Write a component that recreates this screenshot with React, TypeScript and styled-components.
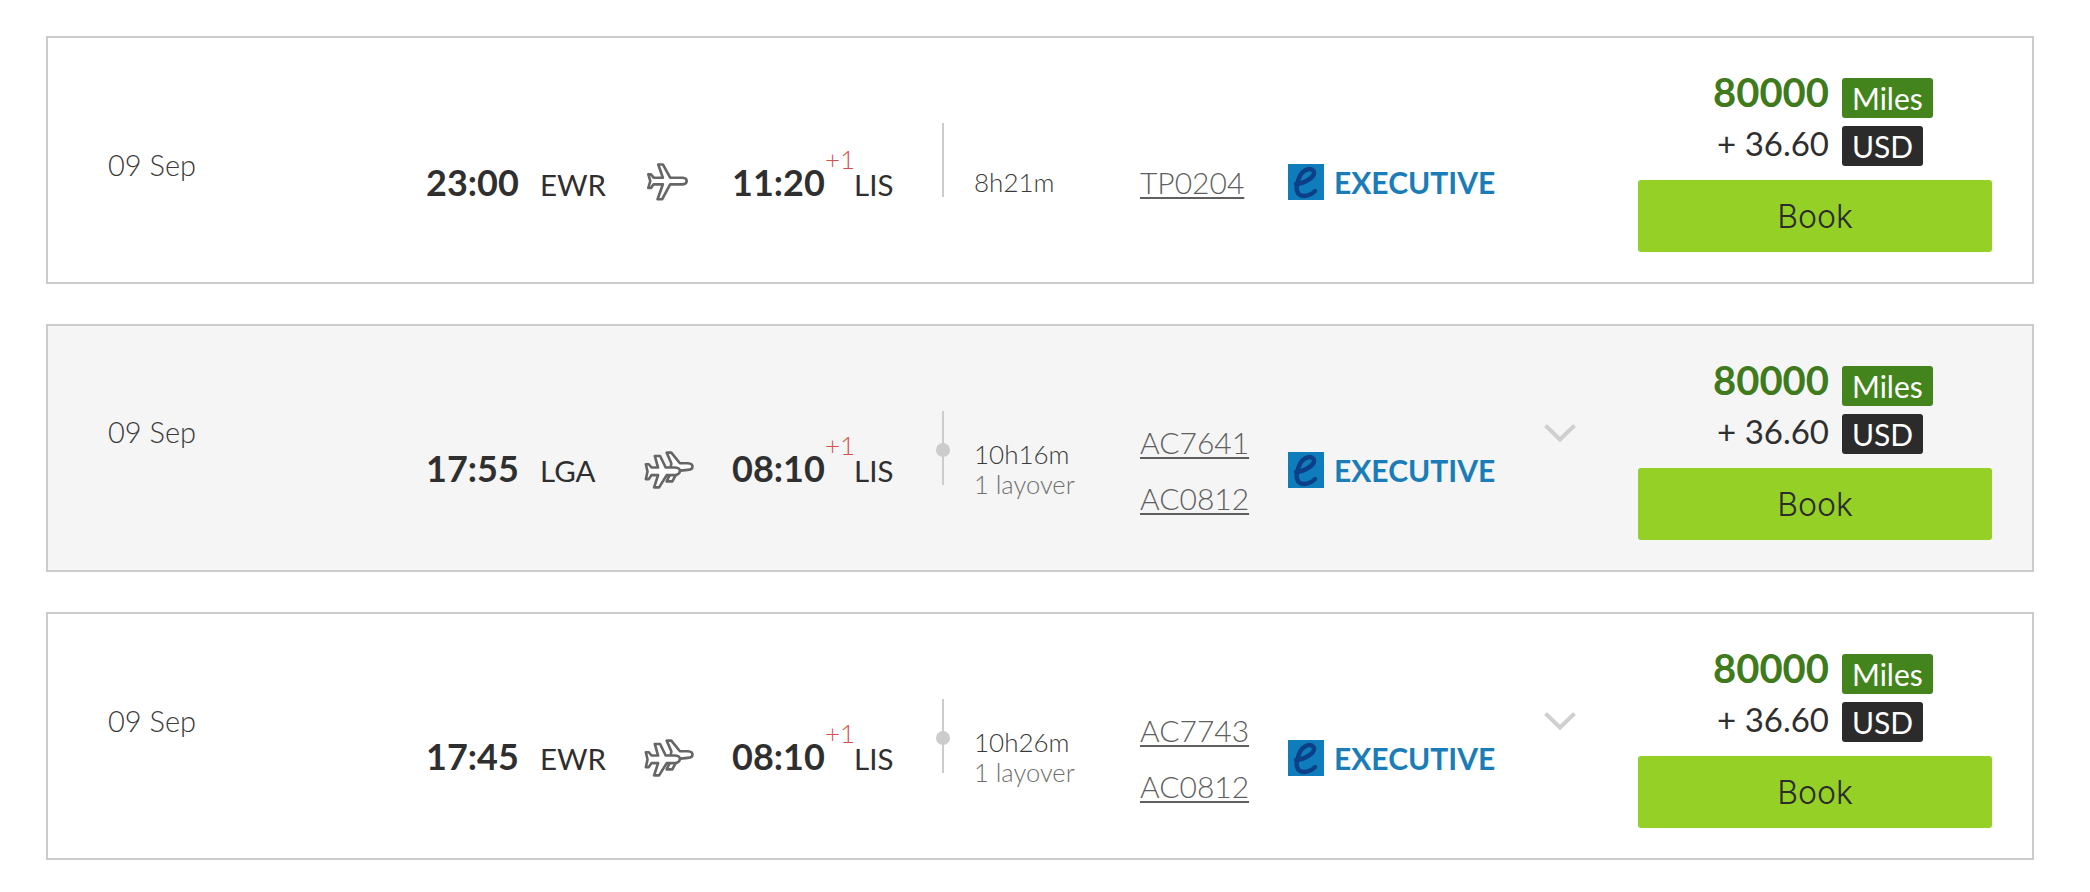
import { FC } from 'react';
import styled, { createGlobalStyle } from 'styled-components';

interface Flight {
  dateOffset: number;
  departure: string;
  origin: string;
  arrival: string;
  duration: string;
  layover?: string;
  codes: string[];
  shaded?: boolean;
}

const flights: Flight[] = [
  { dateOffset: 110, departure: '23:00', origin: 'EWR', arrival: '11:20', duration: '8h21m', codes: ['TP0204'] },
  {
    dateOffset: 89,
    departure: '17:55',
    origin: 'LGA',
    arrival: '08:10',
    duration: '10h16m',
    layover: '1 layover',
    codes: ['AC7641', 'AC0812'],
    shaded: true,
  },
  {
    dateOffset: 90,
    departure: '17:45',
    origin: 'EWR',
    arrival: '08:10',
    duration: '10h26m',
    layover: '1 layover',
    codes: ['AC7743', 'AC0812'],
  },
];

const GlobalStyle = createGlobalStyle`
  body {
    margin: 0;
    background: #fff;
    font-family: Lato, "Liberation Sans", sans-serif;
    color: #2f2f2f;
  }
`;

const Page = styled.div`
  display: flex;
  flex-direction: column;
  gap: 40px;
  padding: 36px 56px 0 46px;
`;

const Card = styled.div<{ $shaded?: boolean }>`
  display: flex;
  align-items: flex-start;
  box-sizing: border-box;
  height: 248px;
  padding-left: 60px;
  border: 2px solid #cccccc;
  background: ${(p) => (p.$shaded ? '#f5f5f5' : '#fff')};
`;

const DateLabel = styled.div<{ $offset: number }>`
  flex: none;
  width: 318px;
  margin-top: ${(p) => p.$offset}px;
  font-size: 29px;
  font-weight: 300;
  line-height: 34px;
  color: #3a3a3a;
`;

const Segment = styled.div`
  flex: none;
  display: flex;
  align-items: center;
  height: 120px;
  margin-top: 84px;
`;

const TimeGroup = styled.div<{ $width: number; $raised: boolean }>`
  display: flex;
  align-items: baseline;
  width: ${(p) => p.$width}px;
  margin-bottom: ${(p) => (p.$raised ? 5 : 0)}px;
`;

const Time = styled.span<{ $width: number }>`
  position: relative;
  width: ${(p) => p.$width}px;
  font-size: 36px;
  font-weight: 700;
`;

const Airport = styled.span`
  font-size: 29.5px;
  font-weight: 400;
`;

const PlaneCell = styled.div`
  display: flex;
  justify-content: center;
  width: 83px;
  padding-right: 22px;
`;

const NextDay = styled.span`
  position: absolute;
  top: -17px;
  left: 93px;
  font-size: 26px;
  font-weight: 300;
  color: #d4504c;
`;

const Separator = styled.div<{ $stop: boolean }>`
  position: relative;
  flex: none;
  align-self: flex-start;
  width: 2px;
  height: 74px;
  margin-top: 1px;
  background: #cccccc;

  &::after {
    content: '';
    display: ${(p) => (p.$stop ? 'block' : 'none')};
    position: absolute;
    top: 32px;
    left: -6px;
    width: 14px;
    height: 14px;
    border-radius: 50%;
    background: #cccccc;
  }
`;

const Duration = styled.div`
  flex: none;
  box-sizing: border-box;
  width: 196px;
  padding-left: 30px;
`;

const Elapsed = styled.div`
  font-size: 26px;
  font-weight: 300;
  line-height: 30px;
  color: #3a3a3a;
`;

const Layover = styled.div`
  margin-bottom: 2px;
  font-size: 25.5px;
  font-weight: 300;
  line-height: 30px;
  color: #6f6f6f;
`;

const Codes = styled.div`
  flex: none;
  display: flex;
  flex-direction: column;
  gap: 20px;
  width: 148px;
`;

const Code = styled.a`
  font-size: 30px;
  font-weight: 300;
  line-height: 36px;
  color: #5f5f5f;
  text-decoration: underline;
  text-decoration-thickness: 2px;
  text-underline-offset: 3px;
`;

const Cabin = styled.div`
  flex: none;
  display: flex;
  align-items: center;
  gap: 10px;
  width: 256px;
`;

const CabinName = styled.span`
  font-size: 30px;
  font-weight: 700;
  color: #1a7db8;
`;

const Expand = styled.div`
  flex: none;
  align-self: flex-start;
  width: 94px;
  margin-top: 14px;
`;

const Price = styled.div`
  flex: none;
  display: flex;
  flex-direction: column;
  width: 354px;
  margin-top: 40px;
`;

const PriceRow = styled.div`
  display: flex;
  align-items: flex-start;
  gap: 13px;
  height: 40px;
  margin-bottom: 8px;
`;

const Miles = styled.span`
  width: 191px;
  margin-top: -6px;
  font-size: 40px;
  font-weight: 700;
  line-height: 40px;
  text-align: right;
  color: #3f7a1c;
`;

const Cash = styled.span`
  width: 191px;
  margin-top: -3px;
  font-size: 33px;
  font-weight: 400;
  line-height: 40px;
  text-align: right;
`;

const Badge = styled.span<{ $color: string }>`
  box-sizing: border-box;
  height: 40px;
  padding: 0 10px;
  border-radius: 3px;
  font-size: 30px;
  line-height: 40px;
  color: #fff;
  background: ${(p) => p.$color};
`;

const BookButton = styled.button`
  height: 72px;
  margin-top: 6px;
  border: none;
  border-radius: 3px;
  font-family: Inter, "Liberation Sans", sans-serif;
  font-size: 32px;
  font-weight: 300;
  color: #2b2b2b;
  background: #94d025;
`;

const DirectPlane = () => (
  <svg width="43" height="40" viewBox="80 40 130 120" fill="#fff" stroke="#666" strokeWidth="8" strokeLinejoin="round">
    <path d="M200 97 Q200 88 188 87 L150 87 L128 47 L114 47 L128 87 L100 87 L92 77 L84 77 L90 97 L84 118 L92 118 L100 107 L128 107 L112 152 L126 152 L150 107 L188 107 Q200 106 200 97 Z" />
  </svg>
);

const ConnectingPlane = () => (
  <svg width="50" height="38" viewBox="40 60 150 115" fill="#fff" stroke="#666" strokeWidth="8" strokeLinejoin="round">
    <path d="M122 97 L108 65 L122 65 L148 97 L172 97 Q186 98 186 107 Q186 117 172 117 L142 120 L125 152 L108 152 L118 130 Z" />
    <path d="M148 119 Q146 110 132 110 L105 110 L88 75 L72 75 L82 110 L62 110 L54 100 L45 100 L50 122 L45 145 L54 145 L62 133 L82 133 L70 170 L85 170 L108 133 L135 133 Q148 130 148 119 Z" />
  </svg>
);

const CabinMark = () => (
  <svg width="36" height="36" viewBox="0 0 36 36">
    <rect width="36" height="36" fill="#0f7cbb" />
    <path
      d="M8 20 C14 20 27 14 26 8 C25 3 15 4 11 14 C7 24 8 32 16 32 C20 32 24 30 27 27"
      fill="none"
      stroke="#0c3f86"
      strokeWidth="4.4"
      strokeLinecap="round"
    />
  </svg>
);

const FlightCard: FC<{ flight: Flight }> = ({ flight }) => {
  const connecting = flight.codes.length > 1;

  return (
    <Card $shaded={flight.shaded}>
      <DateLabel $offset={flight.dateOffset}>09 Sep</DateLabel>
      <Segment>
        <TimeGroup $width={201} $raised={connecting}>
          <Time $width={114}>{flight.departure}</Time>
          <Airport>{flight.origin}</Airport>
        </TimeGroup>
        <PlaneCell>{connecting ? <ConnectingPlane /> : <DirectPlane />}</PlaneCell>
        <TimeGroup $width={210} $raised={connecting}>
          <Time $width={122}>
            {flight.arrival}
            <NextDay>+1</NextDay>
          </Time>
          <Airport>LIS</Airport>
        </TimeGroup>
        <Separator $stop={connecting} />
        <Duration>
          <Elapsed>{flight.duration}</Elapsed>
          {flight.layover && <Layover>{flight.layover}</Layover>}
        </Duration>
        <Codes>
          {flight.codes.map((code) => (
            <Code key={code}>{code}</Code>
          ))}
        </Codes>
        <Cabin>
          <CabinMark />
          <CabinName>EXECUTIVE</CabinName>
        </Cabin>
        <Expand>
          {connecting && (
            <svg width="32" height="18" viewBox="0 0 32 18" fill="none" stroke="#cfcfcf" strokeWidth="4">
              <path d="M1.5 1.5 L16 15.5 L30.5 1.5" />
            </svg>
          )}
        </Expand>
      </Segment>
      <Price>
        <PriceRow>
          <Miles>80000</Miles>
          <Badge $color="#43841d">Miles</Badge>
        </PriceRow>
        <PriceRow>
          <Cash>+ 36.60</Cash>
          <Badge $color="#2b2b2b">USD</Badge>
        </PriceRow>
        <BookButton>Book</BookButton>
      </Price>
    </Card>
  );
};

export default function App() {
  return (
    <>
      <GlobalStyle />
      <Page>
        {flights.map((flight) => (
          <FlightCard key={flight.departure} flight={flight} />
        ))}
      </Page>
    </>
  );
}
